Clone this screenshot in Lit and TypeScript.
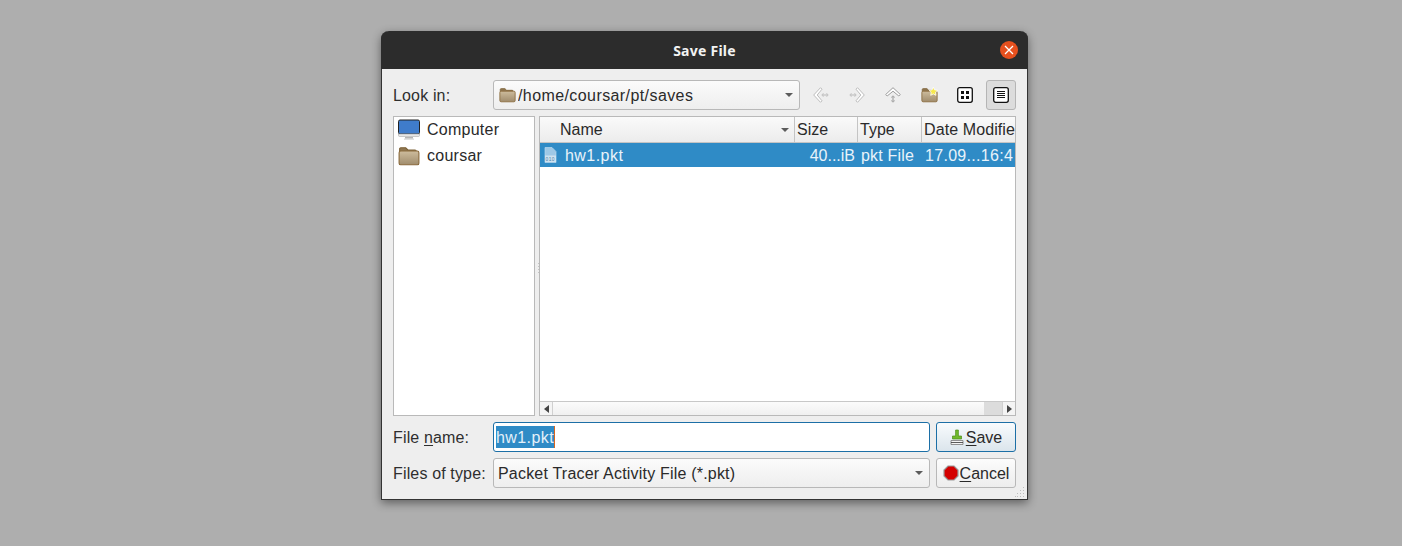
import { LitElement, html, css, svg } from "lit";
import { customElement } from "lit/decorators.js";

const folder = (w: number, h: number, star = false) => html`<svg width=${w} height=${h} viewBox="0 0 20 18" class="ic">
  <defs><linearGradient id="fg" x1="0" y1="0" x2="0" y2="1"><stop offset="0" stop-color="#cdbc9d"/><stop offset="1" stop-color="#a08c6c"/></linearGradient></defs>
  <path d="M1.5 4V2.5A1 1 0 0 1 2.5 1.5H7L9 3.5H15.5A1 1 0 0 1 16.5 4.5V5H1.5Z" fill="#8f7650" stroke="#7d6238"/>
  <rect x="1" y="4.5" width="18" height="12.5" rx="1.5" fill="url(#fg)" stroke="#8a6a3c"/>
  ${star ? svg`<path d="M14.5 -.2l1.5 3.2 3.5.5-2.5 2.4.6 3.5-3.1-1.7-3.1 1.7.6-3.5-2.5-2.4 3.5-.5z" fill="#f7e84a" stroke="#fff" stroke-width=".9"/>` : ""}
</svg>`;

const caret = html`<svg width="8" height="4" viewBox="0 0 8 4" class="ic"><path d="M0 0H8L4 4Z" fill="#5c5c5c"/></svg>`;

@customElement("app-root")
export class AppRoot extends LitElement {
  static styles = css`
    :host { display: block; width: 1402px; height: 546px; box-sizing: border-box; background: #aeaeae; padding: 31px 0 0 381px; overflow: hidden;
      font-family: "Liberation Sans", Arial, sans-serif; font-size: 16px; color: #2a2a2a; }
    .ic { display: block; flex: none; overflow: visible; }
    .win { width: 647px; height: 469px; box-sizing: border-box; display: flex; flex-direction: column; background: #eeeeee; border-radius: 8px 8px 0 0; border: 1px solid #333; border-top: 0;
      box-shadow: 0 3px 10px rgba(0,0,0,.45); position: relative; }
    .title { height: 38px; flex: none; margin: 0 -1px; background: #2c2c2c; border-radius: 8px 8px 0 0; color: #f2f2f2; font: 700 14px "Noto Sans", "Open Sans", sans-serif; letter-spacing: .25px; display: flex; align-items: center; justify-content: center; position: relative; }
    .close { position: absolute; right: 10px; top: 10px; width: 18px; height: 18px; border-radius: 50%; background: #e6501e; display: flex; align-items: center; justify-content: center; }
    .body { flex: 1; min-height: 0; display: flex; flex-direction: column; gap: 6px; padding: 11px; }
    .row { display: flex; align-items: stretch; height: 30px; flex: none; }
    .lab { width: 100px; flex: none; display: flex; align-items: center; padding-top: 1px; box-sizing: border-box; letter-spacing: .15px; color: #2e2e2e; white-space: pre; }
    u { text-decoration-thickness: 1px; text-underline-offset: 2px; }
    .combo { box-sizing: border-box; border: 1px solid #b8b8b8; border-radius: 3px; background: linear-gradient(#fbfbfb, #eeeeee); display: flex; align-items: center; padding: 0 6px 0 4px; gap: 2px; }
    .combo .t { flex: 1; white-space: nowrap; overflow: hidden; padding-top: 1px; }
    .lookin { width: 307px; flex: none; }
    .lookin .t { letter-spacing: .41px; }
    .typec .t { letter-spacing: .2px; }
    .lookin .ic:first-child { margin-left: 1px; }
    .tools { flex: 1; display: flex; align-items: stretch; justify-content: flex-end; }
    .tb { width: 30px; box-sizing: border-box; margin-left: 6px; display: flex; align-items: center; justify-content: center; border: 1px solid transparent; border-radius: 3px; }
    .tb.on { background: #dcdcdc; border-color: #b5b5b5; }
    .main { flex: 1; min-height: 0; display: flex; gap: 4px; }
    .side { width: 142px; box-sizing: border-box; flex: none; background: #fff; border: 1px solid #b9b9b9; }
    .pl { height: 26px; display: flex; align-items: center; gap: 7px; padding-left: 4px; white-space: nowrap; letter-spacing: .25px; }
    .list { flex: 1; min-width: 0; box-sizing: border-box; background: #fff; border: 1px solid #b9b9b9; display: flex; flex-direction: column; }
    .head { height: 26px; flex: none; display: flex; box-sizing: border-box; border-bottom: 1px solid #c4c4c4; background: linear-gradient(#fafafa, #ececec); }
    .hc { box-sizing: border-box; border-right: 1px solid #c4c4c4; display: flex; align-items: center; padding-left: 2px; white-space: nowrap; overflow: hidden; }
    .hc:last-child { border-right: 0; }
    .name { width: 255px; padding-left: 20px; padding-right: 5px; justify-content: space-between; }
    .size { width: 63px; }
    .type { width: 64px; }
    .date { flex: 1; min-width: 0; letter-spacing: .1px; }
    .sel { height: 24px; flex: none; background: #2f8bc6; color: #e9f3fa; display: flex; align-items: center; white-space: nowrap; letter-spacing: .2px; }
    .sel span { box-sizing: border-box; overflow: hidden; padding-top: 1px; }
    .c1 { width: 255px; display: flex; align-items: center; gap: 8px; padding-left: 4px; letter-spacing: .45px; }
    .c1 .ic { margin-top: -1px; }
    .sel .c2 { width: 60px; text-align: right; letter-spacing: 0; }
    .c3 { width: 65px; padding-left: 6px; }
    .sel .c4 { flex: 1; padding-left: 5px; letter-spacing: .3px; }
    .fill { flex: 1; }
    .sb { height: 13px; flex: none; display: flex; align-items: stretch; background: #f2f2f2; border-top: 1px solid #c8c8c8; }
    .sba { width: 13px; display: flex; align-items: center; justify-content: center; box-sizing: border-box; border-right: 1px solid #d0d0d0; background: #f4f4f4; }
    .sba.r { border-right: 0; border-left: 1px solid #d0d0d0; }
    .sbt { flex: 1; background: linear-gradient(#fbfbfb, #f0f0f0); }
    .sbh { width: 18px; background: #dcdcdc; }
    .field { flex: 1; box-sizing: border-box; border: 1px solid #1c6fa6; border-radius: 3px; background: #fff; display: flex; align-items: center; padding: 0 1px 0 2px; }
    .selt { background: #2f8bc6; color: #e4f0f9; border-right: 1px solid #d9661f; height: 22px; line-height: 23px; letter-spacing: .42px; }
    .btn { width: 80px; box-sizing: border-box; flex: none; margin-left: 6px; border: 1px solid #b8b8b8; border-radius: 3px; background: linear-gradient(#fcfcfc, #ededed); display: flex; align-items: center; justify-content: center; gap: 1px; white-space: nowrap; }
    .btn span { padding-top: 1px; }
    .btn.def { border-color: #1c6fa6; background: linear-gradient(#f8fbfd, #dbe5ec); gap: 2px; }
    .typec { flex: 1; min-width: 0; }
    .grip { position: absolute; right: 1px; bottom: 1px; }
    .handle { position: absolute; left: 156px; top: 232px; }
  `;

  render() {
    return html`<div class="win">
      <div class="title">Save File
        <div class="close"><svg width="10" height="10" viewBox="0 0 10 10" class="ic"><path d="M1 1L9 9M9 1L1 9" stroke="#fff" stroke-width="1.3"/></svg></div>
      </div>
      <div class="body">
        <div class="row">
          <div class="lab">Look in:</div>
          <div class="combo lookin">${folder(17, 16)}<span class="t">/home/coursar/pt/saves</span>${caret}</div>
          <div class="tools">
            <div class="tb"><svg width="16" height="16" viewBox="0 0 16 16" class="ic"><path d="M7.5 .7L.7 8L7.5 15.3L9 13.8L4.2 8L9 2.2Z" fill="#fff" stroke="#bcbcbc"/><circle cx="10.2" cy="8" r="1.1" fill="none" stroke="#bcbcbc"/><circle cx="13.8" cy="8" r="1.1" fill="none" stroke="#bcbcbc"/></svg></div>
            <div class="tb"><svg width="16" height="16" viewBox="0 0 16 16" class="ic"><path d="M8.5 .7L15.3 8L8.5 15.3L7 13.8L11.8 8L7 2.2Z" fill="#fff" stroke="#bcbcbc"/><circle cx="5.8" cy="8" r="1.1" fill="none" stroke="#bcbcbc"/><circle cx="2.2" cy="8" r="1.1" fill="none" stroke="#bcbcbc"/></svg></div>
            <div class="tb"><svg width="16" height="16" viewBox="0 0 16 16" class="ic"><path d="M.7 7.5L8 .7L15.3 7.5L13.8 9L8 4.2L2.2 9Z" fill="#fff" stroke="#9c9c9c"/><circle cx="8" cy="10.2" r="1.1" fill="none" stroke="#9c9c9c"/><circle cx="8" cy="13.8" r="1.1" fill="none" stroke="#9c9c9c"/></svg></div>
            <div class="tb">${folder(17, 16, true)}</div>
            <div class="tb"><svg width="16" height="16" viewBox="0 0 16 16" class="ic"><rect x=".7" y=".7" width="14.6" height="14.6" rx="2" fill="#fff" stroke="#111" stroke-width="1.3"/><rect x="4" y="4" width="3" height="3" fill="#111"/><rect x="9" y="4" width="3" height="3" fill="#111"/><rect x="4" y="9" width="3" height="3" fill="#111"/><rect x="9" y="9" width="3" height="3" fill="#111"/></svg></div>
            <div class="tb on"><svg width="16" height="16" viewBox="0 0 16 16" class="ic"><rect x=".7" y=".7" width="14.6" height="14.6" rx="2" fill="#fff" stroke="#111" stroke-width="1.3"/><path d="M4 4.5H12M4 6.5H12M4 8.5H12M4 10.5H12" stroke="#111" stroke-width="1"/></svg></div>
          </div>
        </div>
        <div class="main">
          <div class="side">
            <div class="pl"><svg width="22" height="22" viewBox="0 0 22 22" class="ic"><rect x=".5" y="1" width="21" height="14" rx="1.5" fill="#3f7ccb" stroke="#222"/><path d="M.5 15H21.5V16.5A1 1 0 0 1 20.5 17.5H1.5A1 1 0 0 1 .5 16.5Z" fill="#e6e6e6" stroke="#aaa" stroke-width=".6"/><rect x="7" y="18" width="8" height="1.6" fill="#b5b5b5"/><rect x="6" y="19.6" width="10" height="1" fill="#cfcfcf"/></svg>Computer</div>
            <div class="pl">${folder(22, 20)}coursar</div>
          </div>
          <div class="list">
            <div class="head">
              <div class="hc name"><span>Name</span>${caret}</div>
              <div class="hc size">Size</div>
              <div class="hc type">Type</div>
              <div class="hc date">Date Modifie</div>
            </div>
            <div class="sel">
              <span class="c1"><svg width="13" height="16" viewBox="0 0 13 16" class="ic"><path d="M1 .5H8L12 4.5V15.5H1Z" fill="#9ec8e6" stroke="#b8d8ee" stroke-width=".7"/><rect x="1" y="8.5" width="11" height="6.5" fill="#cfe2f0"/><text x="1.6" y="13.6" font-size="4.8" font-family="Liberation Sans" fill="#4c7fa6">010</text></svg>hw1.pkt</span>
              <span class="c2">40...iB</span>
              <span class="c3">pkt File</span>
              <span class="c4">17.09...16:4</span>
            </div>
            <div class="fill"></div>
            <div class="sb">
              <div class="sba"><svg width="5" height="8" viewBox="0 0 5 8" class="ic"><path d="M5 0V8L0 4Z" fill="#444"/></svg></div>
              <div class="sbt"></div>
              <div class="sbh"></div>
              <div class="sba r"><svg width="5" height="8" viewBox="0 0 5 8" class="ic"><path d="M0 0V8L5 4Z" fill="#444"/></svg></div>
            </div>
          </div>
        </div>
        <div class="row">
          <div class="lab">File <u>n</u>ame:</div>
          <div class="field"><span class="selt">hw1.pkt</span></div>
          <div class="btn def"><svg width="14" height="17" viewBox="0 0 14 17" class="ic"><path d="M1 11.5H13V15.5H1Z" fill="#f4f4f4" stroke="#777" stroke-width=".8"/><path d="M1 13.5H13" stroke="#333" stroke-width=".8"/><path d="M5.6 1H8.4V7H11.5V10H2.5V7H5.6Z" fill="#6fba2c" stroke="#4c8c1a" stroke-width=".7"/></svg><span><u>S</u>ave</span></div>
        </div>
        <div class="row">
          <div class="lab">Files of type:</div>
          <div class="combo typec"><span class="t">Packet Tracer Activity File (*.pkt)</span>${caret}</div>
          <div class="btn"><svg width="16" height="16" viewBox="0 0 16 16" class="ic"><path d="M5 1H11L15 5V11L11 15H5L1 11V5Z" fill="#d40000" stroke="#999" stroke-width="1.2"/></svg><span><u>C</u>ancel</span></div>
        </div>
      </div>
      <svg class="grip" width="12" height="12" viewBox="0 0 12 12"><g fill="#bdbdbd"><rect x="9" y="1" width="1" height="1"/><rect x="6" y="4" width="1" height="1"/><rect x="9" y="4" width="1" height="1"/><rect x="3" y="7" width="1" height="1"/><rect x="6" y="7" width="1" height="1"/><rect x="9" y="7" width="1" height="1"/><rect x="1" y="10" width="1" height="1"/><rect x="3" y="10" width="1" height="1"/><rect x="6" y="10" width="1" height="1"/><rect x="9" y="10" width="1" height="1"/></g></svg>
      <svg class="handle" width="2" height="12" viewBox="0 0 2 12"><g fill="#c4c4c4"><rect width="1" height="1"/><rect y="3" width="1" height="1"/><rect y="6" width="1" height="1"/><rect y="9" width="1" height="1"/></g></svg>
    </div>`;
  }
}
